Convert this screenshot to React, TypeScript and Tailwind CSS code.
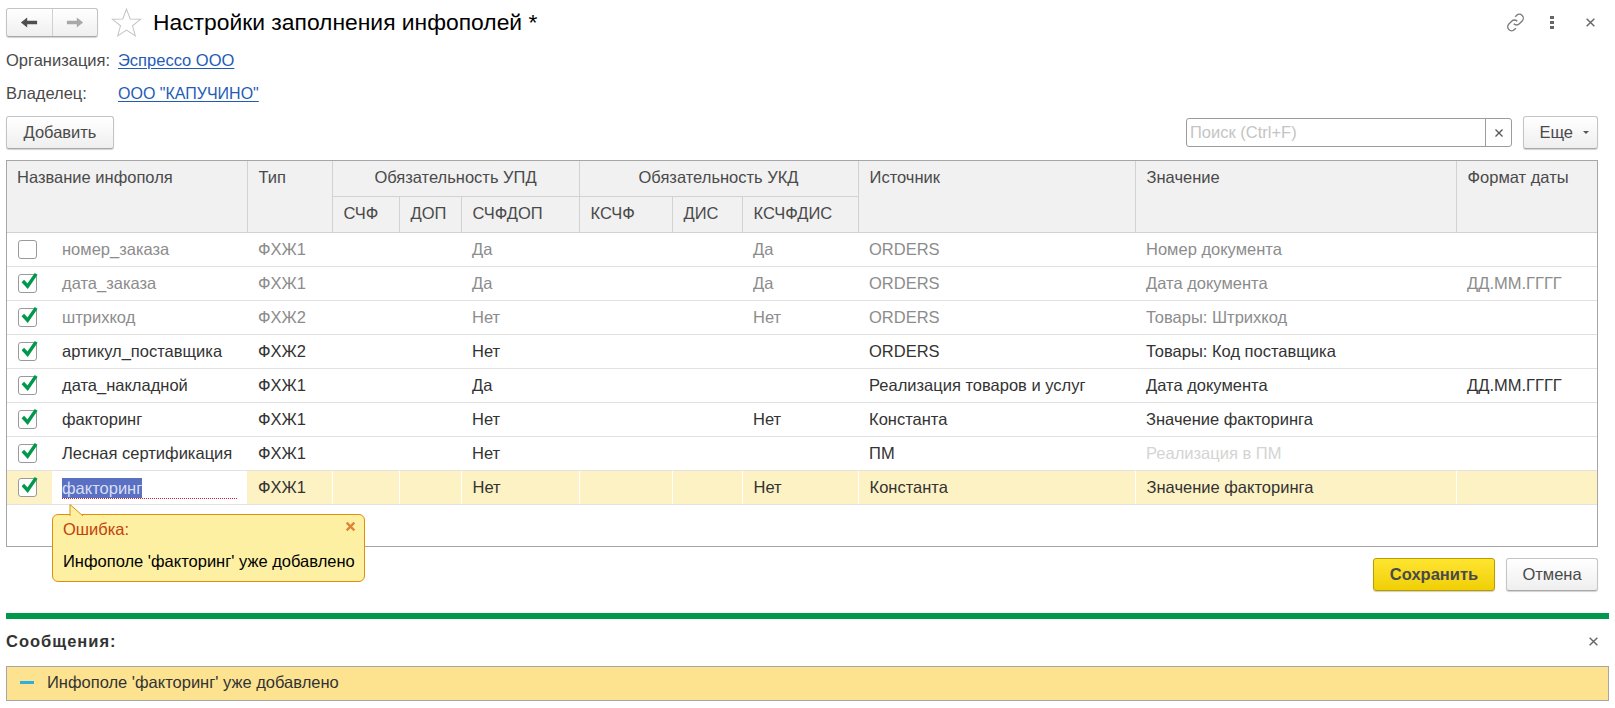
import React from "react";

const widths = [45, 195, 85, 67, 62, 118, 93, 70, 116, 277, 321, 141];

type Row = { on: boolean; name: string; type: string; upd: string; ukd: string; src: string; val: string; fmt?: string; dim?: boolean; faintVal?: boolean };
const rows: Row[] = [
  { on: false, name: "номер_заказа", type: "ФХЖ1", upd: "Да", ukd: "Да", src: "ORDERS", val: "Номер документа", dim: true },
  { on: true, name: "дата_заказа", type: "ФХЖ1", upd: "Да", ukd: "Да", src: "ORDERS", val: "Дата документа", fmt: "ДД.ММ.ГГГГ", dim: true },
  { on: true, name: "штрихкод", type: "ФХЖ2", upd: "Нет", ukd: "Нет", src: "ORDERS", val: "Товары: Штрихкод", dim: true },
  { on: true, name: "артикул_поставщика", type: "ФХЖ2", upd: "Нет", ukd: "", src: "ORDERS", val: "Товары: Код поставщика" },
  { on: true, name: "дата_накладной", type: "ФХЖ1", upd: "Да", ukd: "", src: "Реализация товаров и услуг", val: "Дата документа", fmt: "ДД.ММ.ГГГГ" },
  { on: true, name: "факторинг", type: "ФХЖ1", upd: "Нет", ukd: "Нет", src: "Константа", val: "Значение факторинга" },
  { on: true, name: "Лесная сертификация", type: "ФХЖ1", upd: "Нет", ukd: "", src: "ПМ", val: "Реализация в ПМ", faintVal: true },
];

function Check({ on }: { on: boolean }) {
  return (
    <span className="relative block w-[19px] h-[19px] ml-[11px] rounded-[3px] border border-[#9a9a9a] bg-white">
      {on && (
        <svg viewBox="0 0 20 20" className="absolute left-[1px] top-[-4px] w-[19px] h-[19px]">
          <path d="M3 10.5 L8 16 L17 3" fill="none" stroke="#00984a" strokeWidth="3.6" />
        </svg>
      )}
    </span>
  );
}

function X({ className, color = "#555", w = 1.3 }: { className: string; color?: string; w?: number }) {
  return (
    <svg viewBox="0 0 10 10" className={className}>
      <path d="M1.5 1.5 L8.5 8.5 M8.5 1.5 L1.5 8.5" stroke={color} strokeWidth={w} fill="none" />
    </svg>
  );
}

const thBase = "border-r border-b border-[#d2d2d2] bg-[#f1f1f1] font-normal text-[#4a4a4a] align-top px-[11px] pt-[4px] whitespace-nowrap";
const sub = "border-r border-b border-[#d2d2d2] bg-[#f1f1f1] font-normal text-[#4a4a4a] text-left pl-[11px] pr-0 pt-[4px] h-[36px] align-top whitespace-nowrap";
const btn = "rounded-[3px] border border-[#c4c4c4] border-b-[#a8a8a8] bg-gradient-to-b from-white to-[#efefef] shadow-[0_1px_1px_rgba(0,0,0,0.18)] text-[#4a4a4a]";

export default function App() {
  return (
    <div className="relative w-[1615px] h-[708px] overflow-hidden bg-white font-['Liberation_Sans',Arial,sans-serif] text-[16.5px] text-[#333]">
      {/* Title bar */}
      <div className="flex items-center h-[43px] pt-[1px] pl-[6px] pr-[19px]">
        <div className={`flex w-[92px] h-[29px] ${btn}`}>
          <div className="flex flex-1 items-center justify-center border-r border-[#d0d0d0]">
            <svg viewBox="0 0 20 14" className="w-[18px] h-[13px]"><path d="M1 7 L8 1.5 V5 H19 V9 H8 V12.5 Z" fill="#4f4f4f" /></svg>
          </div>
          <div className="flex flex-1 items-center justify-center">
            <svg viewBox="0 0 20 14" className="w-[18px] h-[13px]"><path d="M19 7 L12 1.5 V5 H1 V9 H12 V12.5 Z" fill="#a8a8a8" /></svg>
          </div>
        </div>
        <svg viewBox="0 0 30 30" className="ml-[13px] w-[31px] h-[31px]">
          <path d="M15 2 L18.6 11.6 L28.6 11.9 L20.8 18.2 L23.5 28 L15 22.4 L6.5 28 L9.2 18.2 L1.4 11.9 L11.4 11.6 Z" fill="none" stroke="#c4c4c4" strokeWidth="1" />
        </svg>
        <h1 className="ml-[11px] text-[22.85px] font-normal leading-none text-black">Настройки заполнения инфополей *</h1>
        <div className="ml-auto flex items-center">
          <svg viewBox="0 0 24 24" className="w-[21px] h-[21px]" fill="none" stroke="#7a7a7a" strokeWidth="1.5">
            <path d="M10 13.5a4.5 4.5 0 0 0 6.4 0l3.2-3.2a4.5 4.5 0 0 0-6.4-6.4l-1.6 1.6" />
            <path d="M14 10.5a4.5 4.5 0 0 0-6.4 0l-3.2 3.2a4.5 4.5 0 0 0 6.4 6.4l1.6-1.6" />
          </svg>
          <span className="ml-[24px] flex flex-col gap-[2px]">
            <span className="block w-[4px] h-[3px] bg-[#666]" />
            <span className="block w-[4px] h-[3px] bg-[#666]" />
            <span className="block w-[4px] h-[3px] bg-[#666]" />
          </span>
          <X className="ml-[31px] w-[11px] h-[11px]" color="#666" />
        </div>
      </div>

      {/* Fields */}
      <div className="flex items-center h-[33px] pt-[2px] pl-[6px]">
        <span className="w-[112px] text-[#4a4a4a]">Организация:</span>
        <span className="text-[#1f5cb8] underline underline-offset-2">Эспрессо ООО</span>
      </div>
      <div className="flex items-center h-[33px] pt-[2px] pl-[6px]">
        <span className="w-[112px] text-[#4a4a4a]">Владелец:</span>
        <span className="text-[#1f5cb8] underline underline-offset-2 text-[16px]">ООО "КАПУЧИНО"</span>
      </div>

      {/* Command bar */}
      <div className="flex items-center h-[33px] mt-[7px] pl-[6px] pr-[17px]">
        <button className={`w-[108px] h-[33px] ${btn}`}>Добавить</button>
        <div className="ml-auto flex w-[326px] h-[29px] rounded-[3px] border border-[#9c9c9c] bg-white">
          <span className="flex-1 pl-[3px] leading-[27px] text-[#c4c4c4]">Поиск (Ctrl+F)</span>
          <span className="flex w-[26px] items-center justify-center border-l border-[#9c9c9c]">
            <X className="w-[10px] h-[10px]" />
          </span>
        </div>
        <button className={`ml-[11px] flex w-[75px] h-[33px] items-center justify-end pr-[8px] ${btn}`}>
          <span>Еще</span>
          <span className="ml-[10px] w-0 h-0 border-x-[3px] border-x-transparent border-t-[3px] border-t-[#555]" />
        </button>
      </div>

      {/* Table */}
      <div className="mt-[11px] ml-[6px] mr-[17px] h-[387px] border border-[#a6a6a6] bg-white">
        <table className="table-fixed border-collapse w-full">
          <colgroup>
            {widths.map((w, i) => <col key={i} style={{ width: w }} />)}
          </colgroup>
          <thead>
            <tr className="h-[35px]">
              <th colSpan={2} rowSpan={2} className={`${thBase} text-left !pl-[10px]`}>Название инфополя</th>
              <th rowSpan={2} className={`${thBase} text-left`}>Тип</th>
              <th colSpan={3} className={`${thBase} text-center`}>Обязательность УПД</th>
              <th colSpan={3} className={`${thBase} text-center`}>Обязательность УКД</th>
              <th rowSpan={2} className={`${thBase} text-left`}>Источник</th>
              <th rowSpan={2} className={`${thBase} text-left`}>Значение</th>
              <th rowSpan={2} className={`${thBase} text-left border-r-0`}>Формат даты</th>
            </tr>
            <tr>
              {["СЧФ", "ДОП", "СЧФДОП", "КСЧФ", "ДИС", "КСЧФДИС"].map((t) => (
                <th key={t} className={sub}>{t}</th>
              ))}
            </tr>
          </thead>
          <tbody>
            {rows.map((r) => {
              const c = r.dim ? "text-[#8c8c8c]" : "text-[#333]";
              const td = "pl-[11px] pr-0 h-[34px] border-b border-[#e2e2e2] whitespace-nowrap";
              return (
                <tr key={r.name + r.type} className={c}>
                  <td className="h-[34px] border-b border-[#e2e2e2] p-0"><Check on={r.on} /></td>
                  <td className={`${td} !pl-[10px]`}>{r.name}</td>
                  <td className={td}>{r.type}</td>
                  <td className={td}></td>
                  <td className={td}></td>
                  <td className={td}>{r.upd}</td>
                  <td className={td}></td>
                  <td className={td}></td>
                  <td className={td}>{r.ukd}</td>
                  <td className={td}>{r.src}</td>
                  <td className={`${td} ${r.faintVal ? "text-[#d4d4d4]" : ""}`}>{r.val}</td>
                  <td className={td}>{r.fmt}</td>
                </tr>
              );
            })}
            <tr className="bg-[#fdf2c4]">
              <td className="h-[34px] border-b border-[#e2e2e2] p-0"><Check on /></td>
              <td className="h-[34px] border-b border-[#e2e2e2] bg-white px-[10px] pt-[2px]">
                <div className="h-[21px] leading-[20px] border-b border-dotted border-[#d0202a]">
                  <span className="inline-block h-[20px] bg-[#5a70c2] text-[#d8def2]">факторинг</span>
                </div>
              </td>
              {["ФХЖ1", "", "", "Нет", "", "", "Нет", "Константа", "Значение факторинга", ""].map((t, i) => (
                <td key={i} className="pl-[11px] pr-0 h-[34px] border-b border-r border-[#e2e2e2] border-r-white last:border-r-0 whitespace-nowrap">{t}</td>
              ))}
            </tr>
          </tbody>
        </table>
      </div>

      {/* Footer buttons */}
      <div className="flex justify-end gap-[11px] mt-[11px] mr-[17px]">
        <button className="w-[122px] h-[33px] rounded-[3px] border border-[#b89c00] bg-gradient-to-b from-[#ffe52e] to-[#f0cf00] font-bold text-[#4a4a4a] shadow-[0_1px_1px_rgba(0,0,0,0.2)]">Сохранить</button>
        <button className={`w-[92px] h-[33px] ${btn}`}>Отмена</button>
      </div>

      {/* Messages */}
      <div className="mt-[22px] mx-[6px] h-[6px] bg-[#00984a]" />
      <div className="flex items-center justify-between h-[47px] pb-[2px] pl-[6px] pr-[16px]">
        <span className="font-bold text-[#333] tracking-[1px]">Сообщения:</span>
        <X className="w-[11px] h-[11px]" color="#666" />
      </div>
      <div className="flex items-center h-[35px] pb-[2px] mx-[6px] border border-[#a6a6a6] bg-[#fde38f] pl-[13px]">
        <span className="block w-[14px] h-[3px] bg-[#2bb0e0]" />
        <span className="ml-[13px]">Инфополе 'факторинг' уже добавлено</span>
      </div>

      {/* Error tooltip */}
      <div className="absolute left-[52px] top-[514px] w-[313px] h-[68px] rounded-[6px] border border-[#e08e0b] bg-[#fdf0a3] text-black">
        <svg viewBox="0 0 16 12" className="absolute left-[16px] top-[-11px] w-[16px] h-[12px]">
          <path d="M1 12 V0.5 L14 12" fill="#fdf0a3" stroke="#e08e0b" strokeWidth="1" />
        </svg>
        <div className="pl-[10px] pt-[4px] text-[#c2410c] leading-[20px]">Ошибка:</div>
        <X className="absolute right-[8px] top-[6px] w-[11px] h-[11px]" color="#e0803a" w={2} />
        <div className="pl-[10px] mt-[12px] whitespace-nowrap leading-[20px]">Инфополе 'факторинг' уже добавлено</div>
      </div>
    </div>
  );
}
